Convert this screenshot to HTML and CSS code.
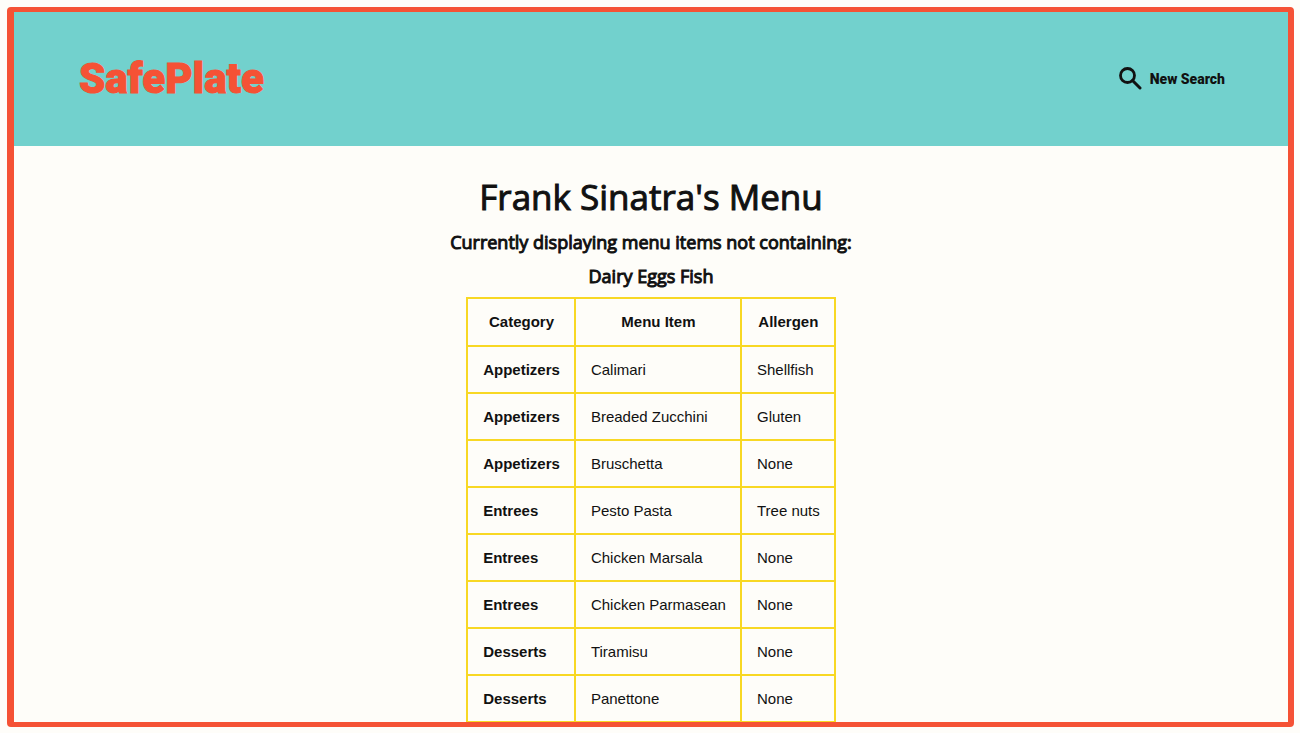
FILE: index.html
```html
<!DOCTYPE html>
<html lang="en">
<head>
<meta charset="utf-8">
<meta name="viewport" content="width=device-width, initial-scale=1">
<title>SafePlate</title>
<link rel="stylesheet" href="styles.css">
</head>
<body>
<div class="frame">
  <header class="header">
    <a class="logo" href="#">SafePlate</a>
    <a class="search" href="#">
      <svg class="search-icon" viewBox="0 0 24 24" aria-hidden="true">
        <circle cx="9.500" cy="8.500" r="7" fill="none" stroke="currentColor" stroke-width="2.800"/>
        <path d="M14.500 13.500l7.500 7.500" fill="none" stroke="currentColor" stroke-width="3" stroke-linecap="round"/>
      </svg>
      <span>New Search</span>
    </a>
  </header>
  <main class="content">
    <h1 class="title">Frank Sinatra's Menu</h1>
    <h2 class="subtitle">Currently displaying menu items not containing:</h2>
    <h2 class="subtitle">Dairy Eggs Fish</h2>
    <table class="menu">
      <thead>
        <tr><th scope="col">Category</th><th scope="col">Menu Item</th><th scope="col">Allergen</th></tr>
      </thead>
      <tbody>
        <tr><th scope="row">Appetizers</th><td>Calimari</td><td>Shellfish</td></tr>
        <tr><th scope="row">Appetizers</th><td>Breaded Zucchini</td><td>Gluten</td></tr>
        <tr><th scope="row">Appetizers</th><td>Bruschetta</td><td>None</td></tr>
        <tr><th scope="row">Entrees</th><td>Pesto Pasta</td><td>Tree nuts</td></tr>
        <tr><th scope="row">Entrees</th><td>Chicken Marsala</td><td>None</td></tr>
        <tr><th scope="row">Entrees</th><td>Chicken Parmasean</td><td>None</td></tr>
        <tr><th scope="row">Desserts</th><td>Tiramisu</td><td>None</td></tr>
        <tr><th scope="row">Desserts</th><td>Panettone</td><td>None</td></tr>
      </tbody>
    </table>
  </main>
</div>
</body>
</html>
```
FILE: styles.css
```css
* {
  box-sizing: border-box;
}

body {
  margin: 0;
  padding: 7px 6px 6px 7px;
  height: 100vh;
  background: #fefdf9;
  color: #111;
}

.frame {
  height: 100%;
  overflow: hidden;
  border: solid #f55235;
  border-width: 5px 6px 5px 7px;
  border-radius: 4px;
}

.header {
  display: flex;
  align-items: center;
  justify-content: space-between;
  height: 134px;
  padding: 0 63px 0 65px;
  background: #72d1cd;
  font-family: Roboto, sans-serif;
  font-weight: 900;
}

.logo {
  color: #f55235;
  font-size: 42px;
  line-height: 48px;
  text-decoration: none;
  -webkit-text-stroke: 1px #f55235;
}

.search {
  display: flex;
  align-items: center;
  gap: 8px;
  color: #111;
  font-size: 14px;
  line-height: 20px;
  text-decoration: none;
}

.search-icon {
  width: 24px;
  height: 24px;
}

.content {
  display: flex;
  flex-direction: column;
  align-items: center;
  padding-top: 26px;
}

.title,
.subtitle {
  margin: 0;
  font-family: "Open Sans", sans-serif;
  font-weight: 400;
  text-align: center;
  -webkit-text-stroke: 1px #111;
}

.title {
  margin-bottom: 3px;
  font-size: 35px;
  line-height: 50px;
}

.subtitle {
  font-size: 18px;
  line-height: 34px;
}

.menu {
  margin-top: 4px;
  border-collapse: collapse;
  font-family: "Liberation Sans", Arial, sans-serif;
  font-size: 15px;
  line-height: 17px;
}

.menu th,
.menu td {
  padding: 14px 14px 14px 15px;
  border: 2px solid #f8d824;
  text-align: left;
}

.menu thead th {
  padding-bottom: 15px;
  text-align: center;
}
```
